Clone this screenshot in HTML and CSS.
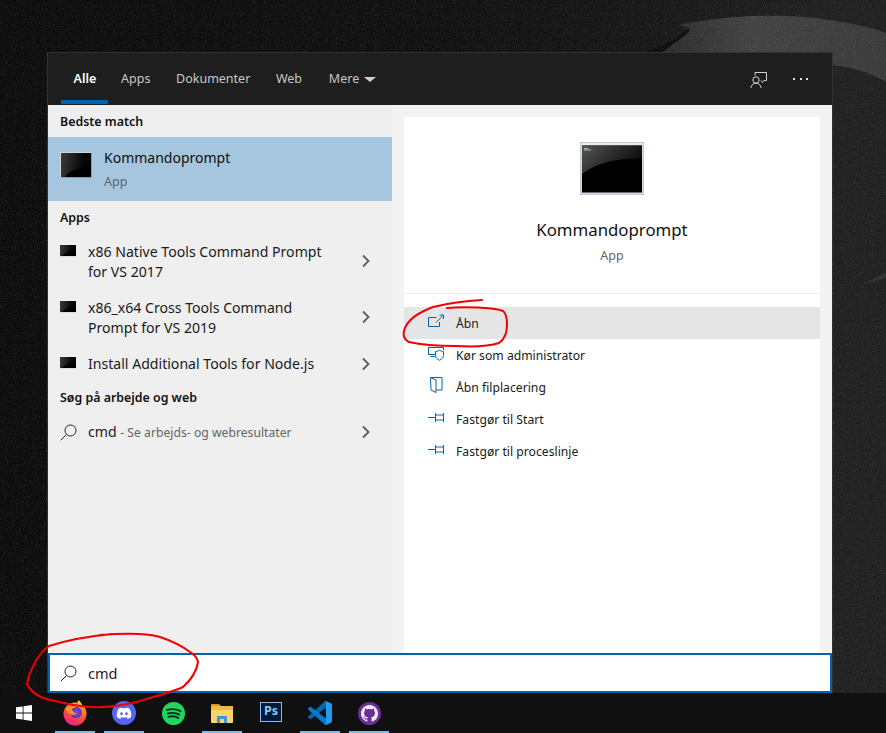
FILE: index.html
```html
<!DOCTYPE html>
<html lang="da">
<head>
<meta charset="utf-8">
<title>Søg</title>
<link rel="stylesheet" href="styles.css">
</head>
<body>
<div class="desktop">
  <svg class="wallpaper" width="886" height="733" viewBox="0 0 886 733" aria-hidden="true">
    <defs>
      <filter id="grain" x="0" y="0" width="100%" height="100%">
        <feTurbulence type="fractalNoise" baseFrequency="1.1" numOctaves="2" seed="4"/>
        <feColorMatrix values="0 0 0 0 1  0 0 0 0 1  0 0 0 0 1  0.9 0 0 0 -0.38"/>
      </filter>
      <linearGradient id="wallbase" x1="0" x2="1" y1="0" y2="0">
        <stop offset="0" stop-color="#0c0c0c"/>
        <stop offset="0.5" stop-color="#101010"/>
        <stop offset="0.75" stop-color="#181818"/>
        <stop offset="0.95" stop-color="#202020"/>
        <stop offset="1" stop-color="#202020"/>
      </linearGradient>
      <linearGradient id="band" x1="0" x2="1" y1="0" y2="0">
        <stop offset="0" stop-color="#2a2a2a"/>
        <stop offset="0.4" stop-color="#424242"/>
        <stop offset="1" stop-color="#3a3a3a"/>
      </linearGradient>
    </defs>
    <rect width="886" height="733" fill="url(#wallbase)"/>
    <path d="M660 54 C672 44 686 36 690 30 C688 27 682 26 678 25 C720 16 780 12 830 20 C850 23 870 27 886 33 L886 82 C870 72 850 67 832 65 L800 54 Z" fill="url(#band)"/>
    <path d="M690 30 C686 36 672 44 660 54 L640 54 C660 46 680 40 684 30 Z" fill="#0d0d0d"/>
    <path d="M864 284 C872 279 880 275 886 273 L886 278 C878 281 870 283 864 284 Z" fill="#303030"/>
    <rect width="886" height="733" filter="url(#grain)" opacity="0.22"/>
  </svg>

  <main class="window">
    <header class="tabbar">
      <nav class="tabs">
        <span class="tab tab-active">Alle</span>
        <span class="tab">Apps</span>
        <span class="tab">Dokumenter</span>
        <span class="tab">Web</span>
        <span class="tab tab-more">Mere <i class="caret"></i></span>
      </nav>
      <div class="tab-tools">
        <svg class="feedback" width="18" height="18" viewBox="0 0 18 18" fill="none" stroke="#d0d0d0" stroke-width="1">
          <path d="M5 4.500V1.500h11.500v8h-2.500M11 9.500l1.500 2 1.500-2"/>
          <circle cx="6" cy="9" r="3.200"/>
          <path d="M0.800 17c.6-3 2.400-4.800 5.200-4.800s4.600 1.800 5.200 4.800"/>
        </svg>
        <span class="dots"><i></i><i></i><i></i></span>
      </div>
    </header>

    <div class="body">
      <section class="results">
        <h2 class="group-title first">Bedste match</h2>
        <div class="best">
          <span class="cmd-icon cmd-mid"></span>
          <div class="best-text">
            <div class="best-name">Kommandoprompt</div>
            <div class="best-kind">App</div>
          </div>
        </div>

        <h2 class="group-title">Apps</h2>
        <div class="row">
          <span class="cmd-icon cmd-small"></span>
          <div class="row-text">x86 Native Tools Command Prompt<br>for VS 2017</div>
          <svg class="chev" width="10" height="14" viewBox="0 0 10 14"><path d="M2 1.500 7.500 7 2 12.500" fill="none" stroke="#5c5c5c" stroke-width="1.800"/></svg>
        </div>
        <div class="row">
          <span class="cmd-icon cmd-small"></span>
          <div class="row-text">x86_x64 Cross Tools Command<br>Prompt for VS 2019</div>
          <svg class="chev" width="10" height="14" viewBox="0 0 10 14"><path d="M2 1.500 7.500 7 2 12.500" fill="none" stroke="#5c5c5c" stroke-width="1.800"/></svg>
        </div>
        <div class="row row-single">
          <span class="cmd-icon cmd-small"></span>
          <div class="row-text">Install Additional Tools for Node.js</div>
          <svg class="chev" width="10" height="14" viewBox="0 0 10 14"><path d="M2 1.500 7.500 7 2 12.500" fill="none" stroke="#5c5c5c" stroke-width="1.800"/></svg>
        </div>

        <h2 class="group-title">Søg på arbejde og web</h2>
        <div class="row row-web">
          <svg class="lens" width="17" height="17" viewBox="0 0 17 17" fill="none" stroke="#222" stroke-width="1"><circle cx="10.500" cy="6.500" r="5.500"/><path d="M6.500 10.500 0.800 16.200"/></svg>
          <div class="row-text">cmd <span class="hint">- Se arbejds- og webresultater</span></div>
          <svg class="chev" width="10" height="14" viewBox="0 0 10 14"><path d="M2 1.500 7.500 7 2 12.500" fill="none" stroke="#5c5c5c" stroke-width="1.800"/></svg>
        </div>
      </section>

      <section class="detail-wrap">
        <div class="detail">
          <div class="hero">
            <svg class="cmd-big" width="64" height="53" viewBox="0 0 64 53">
              <defs>
                <linearGradient id="sheen" x1="0" x2="1" y1="0" y2="0.5">
                  <stop offset="0" stop-color="#555"/><stop offset="1" stop-color="#0a0a0a"/>
                </linearGradient>
              </defs>
              <rect x="0.500" y="0.500" width="63" height="52" fill="#d5dae4" stroke="#c3c9d4"/>
              <rect x="1.500" y="1" width="61" height="2.500" fill="#e9ecf2"/>
              <rect x="2" y="3.500" width="60" height="47" fill="#000"/>
              <path d="M2 3.500h60v13C38 16 18 20 2 32Z" fill="url(#sheen)"/>
              <path d="M4 6.500h4M4 8h7" stroke="#bbb" stroke-width="1"/>
            </svg>
            <div class="hero-name">Kommandoprompt</div>
            <div class="hero-kind">App</div>
          </div>
          <ul class="actions">
            <li class="action action-hover">
              <svg class="act-icon" width="17" height="16" viewBox="0 0 17 16" fill="none" stroke="#0063b1"><path d="M8.500 4.500H.5v9h11V9"/><path d="M8 9.500 15 2.500M11.500 2h4v4"/></svg>
              <span>Åbn</span>
            </li>
            <li class="action">
              <svg class="act-icon" width="17" height="16" viewBox="0 0 17 16" fill="none" stroke="#0063b1"><path d="M7 9.500H.5v-7H15.500V5M2.500 11.500h4.500"/><path d="M7.500 6.500c2-.2 3.300-.7 4-1.500.7.800 2 1.300 4 1.500v4c0 2-1.500 3.500-4 4.800-2.500-1.300-4-2.800-4-4.800Z"/></svg>
              <span>Kør som administrator</span>
            </li>
            <li class="action">
              <svg class="act-icon" width="17" height="16" viewBox="0 0 17 16" fill="none" stroke="#0063b1"><path d="M2.500.5H14V13H8v2.500L3 13Z"/><path d="M8 13V3L2.500.5"/></svg>
              <span>Åbn filplacering</span>
            </li>
            <li class="action">
              <svg class="act-icon" width="17" height="16" viewBox="0 0 17 16" fill="none" stroke="#0063b1"><path d="M0 8.500h7M7.500 4v9M7.500 6h8M7.500 11h8M15.500 4v9"/></svg>
              <span>Fastgør til Start</span>
            </li>
            <li class="action">
              <svg class="act-icon" width="17" height="16" viewBox="0 0 17 16" fill="none" stroke="#0063b1"><path d="M0 8.500h7M7.500 4v9M7.500 6h8M7.500 11h8M15.500 4v9"/></svg>
              <span>Fastgør til proceslinje</span>
            </li>
          </ul>
        </div>
      </section>
    </div>

    <div class="searchbox">
      <svg class="lens" width="17" height="17" viewBox="0 0 17 17" fill="none" stroke="#222" stroke-width="1"><circle cx="10.500" cy="6.500" r="5.500"/><path d="M6.500 10.500 0.800 16.200"/></svg>
      <span class="query">cmd</span>
    </div>
  </main>

  <footer class="taskbar">
    <div class="start">
      <svg width="16" height="16" viewBox="0 0 16 16" fill="#fff"><path d="M0 2.300 6.700 1.400V7.600H0ZM7.500 1.300 16 0V7.600H7.500ZM0 8.400H6.700V14.600L0 13.700ZM7.500 8.400H16V16L7.500 14.700Z"/></svg>
    </div>
    <div class="task task-on">
      <svg width="24" height="26" viewBox="0 0 24 26">
        <defs>
          <linearGradient id="fx" x1="0.800" x2="0.300" y1="0" y2="1"><stop offset="0" stop-color="#ffc02e"/><stop offset="0.45" stop-color="#ff5a2c"/><stop offset="1" stop-color="#e8208a"/></linearGradient>
          <radialGradient id="fxc" cx="0.500" cy="0.500" r="0.600"><stop offset="0" stop-color="#7b4fd0"/><stop offset="1" stop-color="#5a2fa8"/></radialGradient>
        </defs>
        <path d="M15 0c3 2 4.500 4.500 4.500 7.500L12.500 5C14 4 15 2 15 0Z" fill="#ffd23a"/>
        <circle cx="12" cy="14" r="11.500" fill="url(#fx)"/>
        <circle cx="13" cy="12.500" r="5.800" fill="url(#fxc)"/>
        <path d="M2 9c1.500-2.500 5-4 8-3.800 2.500.2 3.500 1.300 3 2-1.500.3-3 .8-4.200 2 .5 1.800 2 3.500 5 4.500-2.500 2-6.500 1.300-8.500-1C3.500 11.500 3 10 2 9Z" fill="#ff8f2a"/>
      </svg>
      <i class="task-bar"></i>
    </div>
    <div class="task task-on">
      <svg width="24" height="24" viewBox="0 0 24 24">
        <circle cx="12" cy="12" r="12" fill="#5865f2"/>
        <svg x="4.500" y="6.500" width="15" height="11.400" viewBox="0 0 127.140 96.360"><path fill="#fff" d="M107.700 8.070A105.150 105.150 0 0 0 81.470 0a72.060 72.060 0 0 0-3.360 6.830 97.680 97.680 0 0 0-29.110 0A72.370 72.370 0 0 0 45.640 0a105.890 105.890 0 0 0-26.250 8.090C2.790 32.650-1.710 56.600.54 80.210a105.730 105.730 0 0 0 32.170 16.150 77.700 77.700 0 0 0 6.890-11.110 68.420 68.420 0 0 1-10.850-5.180c.91-.66 1.800-1.340 2.660-2a75.570 75.570 0 0 0 64.320 0c.87.71 1.760 1.390 2.660 2a68.680 68.680 0 0 1-10.870 5.190 77 77 0 0 0 6.890 11.100 105.250 105.250 0 0 0 32.190-16.140c2.640-27.380-4.510-51.110-18.900-72.150zM42.450 65.690C36.180 65.690 31 60 31 53s5-12.740 11.430-12.740S54 46 53.890 53s-5.050 12.690-11.440 12.690zm42.240 0C78.410 65.690 73.250 60 73.250 53s5-12.740 11.440-12.740S96.230 46 96.120 53s-5.040 12.690-11.430 12.690z"/></svg>
      </svg>
      <i class="task-bar"></i>
    </div>
    <div class="task">
      <svg width="23" height="23" viewBox="0 0 23 23">
        <circle cx="11.500" cy="11.500" r="11.500" fill="#1ed760"/>
        <path d="M5 8c4.500-1.300 9.500-1 13.500 1.200M5.800 11.500c3.800-1 8-.8 11.500 1.100M6.500 14.800c3.200-.8 6.700-.6 9.700 1" fill="none" stroke="#0e2a18" stroke-width="1.900" stroke-linecap="round"/>
      </svg>
    </div>
    <div class="task task-on">
      <svg width="22" height="20" viewBox="0 0 22 20">
        <path d="M0 2a1 1 0 0 1 1-1h7l2 2h-10Z" fill="#d99a1f"/>
        <rect x="0" y="3" width="22" height="17" rx="1" fill="#ffd466"/>
        <rect x="0" y="3" width="22" height="4" fill="#f2b93c"/>
        <path d="M6 20v-7h10v7h-3v-4H9v4Z" fill="#3f97e0"/>
      </svg>
      <i class="task-bar"></i>
    </div>
    <div class="task">
      <span class="ps-icon">Ps</span>
    </div>
    <div class="task task-on">
      <svg width="24" height="24" viewBox="0 0 100 100">
        <path fill="#0065a9" d="M96.500 10.800 75.900.9c-2.400-1.100-5.200-.6-7 1.200L1.400 63.600c-1.800 1.600-1.800 4.500 0 6.100l5.500 5c1.500 1.300 3.700 1.400 5.300.2L93.400 13.300c2.700-2 6.600-.1 6.600 3.300v-.2c0-2.400-1.400-4.600-3.500-5.600Z"/>
        <path fill="#007acc" d="M96.500 89.200 75.900 99.100c-2.400 1.100-5.200.6-7-1.200L1.400 36.400c-1.800-1.600-1.800-4.500 0-6.100l5.500-5c1.500-1.300 3.700-1.400 5.300-.2L93.400 86.700c2.700 2 6.600.1 6.600-3.300v.2c0 2.400-1.400 4.600-3.500 5.600Z"/>
        <path fill="#1f9cf0" d="M75.900 99.100c-2.400 1.100-5.200.6-7-1.200 2.300 2.300 6.100.7 6.100-2.600V4.700c0-3.300-3.800-4.900-6.100-2.600 1.800-1.800 4.600-2.300 7-1.200l20.600 9.900c2.200 1 3.500 3.200 3.500 5.600v67.200c0 2.400-1.400 4.600-3.500 5.600Z"/>
      </svg>
      <i class="task-bar"></i>
    </div>
    <div class="task task-on">
      <svg width="23" height="23" viewBox="0 0 23 23">
        <circle cx="11.500" cy="11.500" r="11.500" fill="#6a2f96"/>
        <svg x="3" y="3" width="17" height="17" viewBox="0 0 16 16"><path fill="#f4eef8" d="M8 0C3.580 0 0 3.580 0 8c0 3.540 2.290 6.530 5.470 7.590.4.070.55-.17.55-.38 0-.19-.01-.82-.01-1.490-2.010.37-2.530-.49-2.690-.94-.09-.23-.48-.94-.82-1.130-.28-.15-.68-.52-.01-.53.63-.01 1.080.58 1.230.82.72 1.210 1.870.87 2.330.66.07-.52.28-.87.51-1.070-1.780-.2-3.640-.89-3.640-3.950 0-.87.31-1.590.82-2.150-.08-.2-.36-1.020.08-2.120 0 0 .67-.21 2.200.82.64-.18 1.320-.27 2-.27s1.360.09 2 .27c1.530-1.040 2.200-.82 2.200-.82.44 1.100.16 1.920.08 2.120.51.56.82 1.270.82 2.150 0 3.070-1.870 3.750-3.650 3.950.29.25.54.73.54 1.480 0 1.070-.01 1.930-.01 2.200 0 .21.15.46.55.38A8.010 8.010 0 0016 8c0-4.420-3.580-8-8-8z"/></svg>
      </svg>
      <i class="task-bar"></i>
    </div>
  </footer>

  <svg class="scribble" width="886" height="733" viewBox="0 0 886 733" fill="none" stroke="#f00000" stroke-width="2" stroke-linecap="round" stroke-linejoin="round" aria-hidden="true">
    <path d="M482 300C462 301 445 304 433 307C420 312 410 318 406 326C402 333 403 339 409 342C422 345 438 346 456 346C474 347 490 346 499 343C505 339 507 332 507 325C507 318 506 313 503 311C497 308 490 308 478 307.500C466 307 456 307 447 308"/>
    <path d="M112 634C90 636 68 640 49 646C40 652 30 668 27 684C30 691 36 695 43 698C58 702 74 706 90 707C112 708 132 704 150 698C163 694 175 691 183 687C192 679 197 669 198 662C197 656 193 654 190 652C182 646 172 641 160 637C146 633 125 633 100 635"/>
  </svg>
</div>
</body>
</html>
```

FILE: styles.css
```css
* { box-sizing: border-box; }

html, body {
  margin: 0;
  padding: 0;
  height: 733px;
  overflow: hidden;
  background: #0d0d0d;
}

body {
  font-family: "Noto Sans", "Open Sans", "Liberation Sans", sans-serif;
  font-size: 13px;
  color: #111;
}

.desktop {
  position: relative;
  width: 886px;
  height: 733px;
  display: flex;
  flex-direction: column;
  overflow: hidden;
}

.wallpaper, .scribble {
  position: absolute;
  left: 0;
  top: 0;
  pointer-events: none;
}

.scribble { z-index: 3; }

.window {
  position: relative;
  margin: 52px 0 0 47px;
  width: 786px;
  height: 641px;
  display: flex;
  flex-direction: column;
  border: 1px solid #333;
  border-bottom: 0;
}

/* header */
.tabbar {
  flex: 0 0 52px;
  display: flex;
  justify-content: space-between;
  align-items: stretch;
  background: #1e1e1e;
  padding-left: 13px;
}

.tabs { display: flex; }

.tab {
  display: flex;
  align-items: center;
  padding: 4px 12.800px 0;
  margin-bottom: 1px;
  color: #c8c8c8;
  font-size: 12.500px;
  border-bottom: 4px solid transparent;
}

.tab-active {
  color: #fff;
  font-weight: 600;
  border-bottom-color: #0063b1;
  padding: 4px 12px 0 12.500px;
}

.tab-more {
  gap: 5px;
  padding-left: 14px;
}

.caret {
  width: 0;
  height: 0;
  border-left: 6px solid transparent;
  border-right: 6px solid transparent;
  border-top: 5.500px solid #d0d0d0;
  margin-top: 1px;
}

.tab-tools {
  display: flex;
  align-items: center;
  gap: 25px;
  padding-right: 24px;
}

.feedback { display: block; margin-top: 1px; }

.dots {
  display: flex;
  gap: 4.500px;
}

.dots i {
  width: 2px;
  height: 2px;
  background: #e0e0e0;
}

/* body */
.body {
  flex: 1;
  display: flex;
  min-height: 0;
}

.results {
  flex: 0 0 344px;
  background: #efefef;
}

.group-title {
  margin: 0;
  padding-left: 12px;
  font-size: 12.400px;
  font-weight: 600;
  line-height: 18px;
  color: #111;
}

.group-title.first { padding-top: 8px; padding-bottom: 6px; }

.best {
  height: 64px;
  background: #a6c5de;
  display: flex;
  align-items: flex-start;
  padding: 15px 0 0 12px;
  margin-bottom: 8px;
}

.best-text { margin: -6px 0 0 12px; }

.best-name {
  font-size: 14px;
  line-height: 24px;
  color: #111;
}

.best-kind {
  font-size: 12.500px;
  line-height: 24px;
  color: #566673;
}

.cmd-icon {
  display: block;
  flex: none;
  background:
    radial-gradient(ellipse 120% 70% at 100% 110%, #000 72%, transparent 74%),
    linear-gradient(100deg, #3c3c3c, #050505 70%);
  background-color: #000;
}

.cmd-mid {
  width: 32px;
  height: 26px;
  border: 1px solid #cfd6e0;
  border-bottom-color: #8e9bad;
  border-right-color: #8e9bad;
}

.cmd-small {
  width: 16px;
  height: 12px;
  margin-top: 3px;
  border-bottom: 1px solid #dcdcdc;
}

.row {
  position: relative;
  display: flex;
  align-items: flex-start;
  height: 56px;
  padding: 16px 0 0 12px;
  font-size: 14.100px;
  line-height: 20px;
  color: #1a1a1a;
}

.group-title + .row {
  height: 55px;
  padding-top: 15px;
}

.row-text { margin-left: 12px; }

.row-single { height: 51px; }

.group-title + .row-web {
  height: 50px;
  align-items: center;
  padding-top: 0;
}

.row-web .row-text { margin-left: 11px; }

.hint { color: #666; font-size: 12.200px; }

.chev {
  position: absolute;
  right: 21px;
  top: 28px;
}

.group-title + .row .chev { top: 27px; }
.row-single .chev { top: 19px; }
.group-title + .row-web .chev { top: 18px; }

/* detail */
.detail-wrap {
  flex: 1;
  background: #f3f3f3;
  padding: 12px 12px 0;
  min-width: 0;
}

.detail {
  background: #fff;
  height: 100%;
}

.hero {
  height: 177px;
  display: flex;
  flex-direction: column;
  align-items: center;
  padding-top: 25px;
  border-bottom: 1px solid #e8e8e8;
}

.cmd-big { display: block; }

.hero-name {
  margin-top: 22px;
  font-size: 16.800px;
  line-height: 26px;
  color: #111;
}

.hero-kind {
  margin-top: 3px;
  font-size: 12.500px;
  line-height: 20px;
  color: #666;
}

.actions {
  list-style: none;
  margin: 13px 0 0;
  padding: 0;
}

.action {
  display: flex;
  align-items: center;
  height: 32px;
  padding-left: 24px;
  font-size: 12.200px;
  color: #1a1a1a;
}

.action-hover { background: #e5e5e5; }

.act-icon { display: block; margin-right: 11px; margin-top: -4px; flex: none; }

/* search */
.searchbox {
  flex: 0 0 40px;
  display: flex;
  align-items: center;
  padding-left: 10px;
  background: #fff;
  border: 2px solid #0063b1;
}

.query {
  margin-left: 11px;
  font-size: 14.500px;
  color: #222;
}

/* taskbar */
.taskbar {
  flex: 0 0 40px;
  position: relative;
  z-index: 2;
  display: flex;
  align-items: stretch;
  background: #101010;
}

.start {
  flex: 0 0 50.500px;
  display: flex;
  align-items: center;
  padding-left: 16px;
}

.task {
  position: relative;
  flex: 0 0 49px;
  display: flex;
  align-items: center;
  justify-content: center;
}

.task-bar {
  position: absolute;
  left: 4.500px;
  bottom: 0;
  width: 40px;
  height: 2px;
  background: #76b9ed;
}

.ps-icon {
  display: flex;
  align-items: center;
  justify-content: center;
  width: 22px;
  height: 20px;
  margin-bottom: 3px;
  background: #001a3a;
  border: 1px solid #8fbbe8;
  color: #8fc4f5;
  font-size: 12.500px;
  font-weight: 700;
  line-height: 1;
}
```
